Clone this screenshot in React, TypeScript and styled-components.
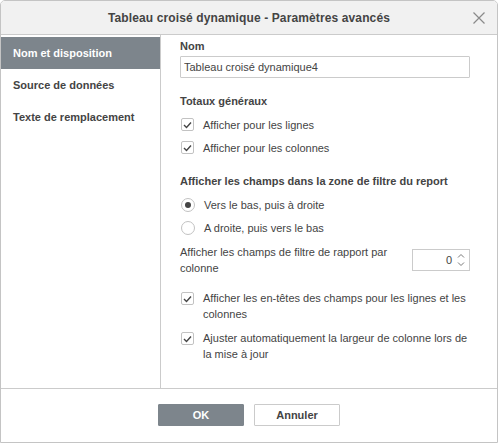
import React, { useState } from "react";
import styled, { createGlobalStyle } from "styled-components";

const GlobalStyle = createGlobalStyle`
	html, body {
		margin: 0;
		padding: 0;
		background: #ffffff;
	}
	* {
		box-sizing: border-box;
	}
`;

const menuItems = ["Nom et disposition", "Source de données", "Texte de remplacement"];

function App() {
	const [active, setActive] = useState(0);
	const [layout, setLayout] = useState<"down" | "over">("down");
	const [rows, setRows] = useState(true);
	const [cols, setCols] = useState(true);
	const [headers, setHeaders] = useState(true);
	const [autofit, setAutofit] = useState(true);

	return (
		<>
			<GlobalStyle />
			<Dialog>
				<Header>
					<Title>Tableau croisé dynamique - Paramètres avancés</Title>
					<CloseButton aria-label="Fermer">
						<svg width="12" height="12" viewBox="0 0 12 12">
							<path d="M0.5 0.5 L11.5 11.5 M11.5 0.5 L0.5 11.5" stroke="#8a8a8a" strokeWidth="1.2" />
						</svg>
					</CloseButton>
				</Header>

				<Body>
					<Sidebar>
						{menuItems.map((item, i) => (
							<MenuItem key={item} $active={i === active} onClick={() => setActive(i)}>
								{item}
							</MenuItem>
						))}
					</Sidebar>

					<Content>
						<FieldLabel>Nom</FieldLabel>
						<TextInput defaultValue="Tableau croisé dynamique4" />

						<SectionTitle $top={15}>Totaux généraux</SectionTitle>
						<Options>
							<CheckRow>
								<CheckBox checked={rows} onToggle={() => setRows(!rows)} />
								<span>Afficher pour les lignes</span>
							</CheckRow>
							<CheckRow>
								<CheckBox checked={cols} onToggle={() => setCols(!cols)} />
								<span>Afficher pour les colonnes</span>
							</CheckRow>
						</Options>

						<SectionTitle $top={14}>Afficher les champs dans la zone de filtre du report</SectionTitle>
						<Options>
							<CheckRow onClick={() => setLayout("down")}>
								<Radio $on={layout === "down"} />
								<span>Vers le bas, puis à droite</span>
							</CheckRow>
							<CheckRow onClick={() => setLayout("over")}>
								<Radio $on={layout === "over"} />
								<span>A droite, puis vers le bas</span>
							</CheckRow>
						</Options>

						<SpinRow>
							<SpinText>Afficher les champs de filtre de rapport par colonne</SpinText>
							<Spinner>
								<SpinValue>0</SpinValue>
								<SpinArrows>
									<svg width="8" height="16" viewBox="0 0 8 16">
										<path d="M1 5.5 L4 2.5 L7 5.5 M1 10.5 L4 13.5 L7 10.5" fill="none" stroke="#7a7a7a" strokeWidth="1" />
									</svg>
								</SpinArrows>
							</Spinner>
						</SpinRow>

						<WrapRow $top={14}>
							<CheckBox checked={headers} onToggle={() => setHeaders(!headers)} />
							<WrapText>Afficher les en-têtes des champs pour les lignes et les colonnes</WrapText>
						</WrapRow>
						<WrapRow $top={8}>
							<CheckBox checked={autofit} onToggle={() => setAutofit(!autofit)} />
							<WrapText>Ajuster automatiquement la largeur de colonne lors de la mise à jour</WrapText>
						</WrapRow>
					</Content>
				</Body>

				<Footer>
					<Button $primary>OK</Button>
					<Button>Annuler</Button>
				</Footer>
			</Dialog>
		</>
	);
}

function CheckBox({ checked, onToggle }: { checked: boolean; onToggle: () => void }) {
	return (
		<Box onClick={onToggle}>
			{checked && (
				<svg width="9" height="8" viewBox="0 0 9 8">
					<path d="M1 4 L3.5 6.5 L8 1.5" fill="none" stroke="#444" strokeWidth="1.4" />
				</svg>
			)}
		</Box>
	);
}

const Dialog = styled.div`
	width: 498px;
	height: 443px;
	display: flex;
	flex-direction: column;
	border: 1px solid #c4c4c4;
	border-radius: 5px 5px 0 0;
	background: #ffffff;
	font-family: "Liberation Sans", Arial, sans-serif;
	font-size: 11px;
	color: #444444;
	overflow: hidden;
`;

const Header = styled.div`
	position: relative;
	height: 34px;
	flex-shrink: 0;
	display: flex;
	align-items: center;
	justify-content: center;
	background: #f1f1f1;
	border-bottom: 1px solid #cbcbcb;
`;

const Title = styled.div`
	font-size: 12px;
	font-weight: bold;
	letter-spacing: 0.12px;
	color: #444444;
	padding-top: 1px;
`;

const CloseButton = styled.div`
	position: absolute;
	right: 12px;
	top: 11px;
	width: 12px;
	height: 12px;
	display: flex;
	cursor: pointer;
`;

const Body = styled.div`
	flex: 1;
	display: flex;
	border-bottom: 1px solid #cbcbcb;
`;

const Sidebar = styled.div`
	width: 160px;
	flex-shrink: 0;
	padding-top: 2px;
	border-right: 1px solid #cbcbcb;
`;

const MenuItem = styled.div<{ $active: boolean }>`
	height: 32px;
	display: flex;
	align-items: center;
	padding-left: 12px;
	font-weight: bold;
	cursor: pointer;
	color: ${(p) => (p.$active ? "#ffffff" : "#444444")};
	background: ${(p) => (p.$active ? "#7d858c" : "transparent")};
`;

const Content = styled.div`
	flex: 1;
	padding: 3px 27px 0 19px;
	display: flex;
	flex-direction: column;
`;

const FieldLabel = styled.div`
	font-weight: bold;
	line-height: 16px;
	margin-bottom: 2px;
`;

const TextInput = styled.input`
	height: 22px;
	width: 100%;
	border: 1px solid #cbcbcb;
	border-radius: 1px;
	padding: 0 3px;
	font-family: inherit;
	font-size: 11px;
	color: #444444;
	outline: none;
`;

const SectionTitle = styled.div<{ $top: number }>`
	font-weight: bold;
	line-height: 16px;
	margin-top: ${(p) => p.$top}px;
`;

const Options = styled.div`
	margin-top: 4px;
	display: flex;
	flex-direction: column;
`;

const CheckRow = styled.label`
	height: 23px;
	display: flex;
	align-items: center;
	gap: 9px;
	cursor: pointer;
	line-height: 16px;
`;

const Box = styled.span`
	width: 13px;
	height: 13px;
	flex-shrink: 0;
	margin-left: 1px;
	display: flex;
	align-items: center;
	justify-content: center;
	border: 1px solid #c2c2c2;
	border-radius: 2px;
	background: #ffffff;
`;

const Radio = styled.span<{ $on: boolean }>`
	width: 14px;
	height: 14px;
	flex-shrink: 0;
	margin-left: 1px;
	border: 1px solid #c2c2c2;
	border-radius: 50%;
	display: flex;
	align-items: center;
	justify-content: center;

	&::after {
		content: "";
		width: 6px;
		height: 6px;
		border-radius: 50%;
		background: ${(p) => (p.$on ? "#444444" : "transparent")};
	}
`;

const SpinRow = styled.div`
	margin-top: 5px;
	display: flex;
	align-items: center;
	justify-content: space-between;
`;

const SpinText = styled.div`
	width: 222px;
	line-height: 16px;
`;

const Spinner = styled.div`
	width: 58px;
	height: 22px;
	display: flex;
	align-items: center;
	justify-content: flex-end;
	border: 1px solid #cbcbcb;
	padding-right: 4px;
`;

const SpinValue = styled.span`
	margin-right: 5px;
`;

const SpinArrows = styled.span`
	display: flex;
`;

const WrapRow = styled.div<{ $top: number }>`
	margin-top: ${(p) => p.$top}px;
	display: flex;
	align-items: flex-start;
	gap: 9px;

	& > span:first-child {
		margin-top: 2px;
	}
`;

const WrapText = styled.div`
	line-height: 16px;
	flex: 1;
`;

const Footer = styled.div`
	height: 53px;
	flex-shrink: 0;
	display: flex;
	justify-content: center;
	gap: 10px;
	padding-top: 15px;
`;

const Button = styled.button<{ $primary?: boolean }>`
	width: 86px;
	height: 22px;
	font-family: inherit;
	font-size: 11px;
	font-weight: bold;
	cursor: pointer;
	border: 1px solid ${(p) => (p.$primary ? "#7d858c" : "#cbcbcb")};
	background: ${(p) => (p.$primary ? "#7d858c" : "#ffffff")};
	color: ${(p) => (p.$primary ? "#ffffff" : "#444444")};
	border-radius: 1px;
`;

export default App;
